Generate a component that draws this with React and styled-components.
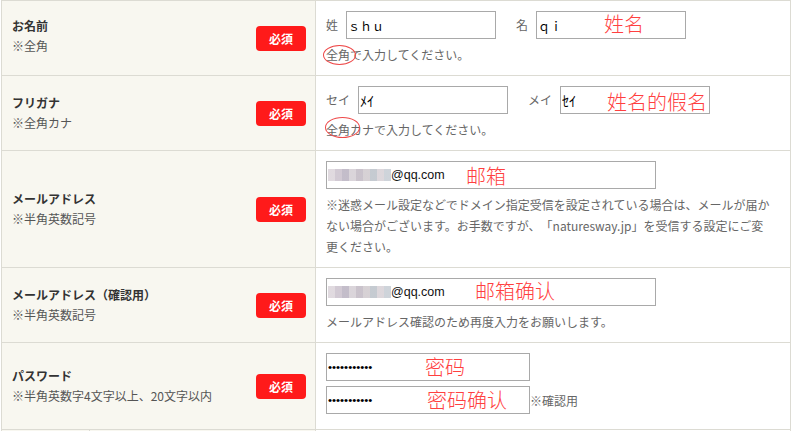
import React from 'react';
import styled, { createGlobalStyle } from 'styled-components';

const Global = createGlobalStyle`
  html, body { margin: 0; padding: 0; background: #fff; }
  body {
    font-family: "Noto Sans CJK JP", "Noto Sans", sans-serif;
    font-size: 12px;
    color: #333;
    text-spacing-trim: space-all;
  }
`;

const Table = styled.div`
  margin-left: 1px;
  width: 790px;
  box-sizing: border-box;
  border-top: 1px solid #dcdbd3;
  border-left: 1px solid #dcdbd3;
  border-right: 1px solid #dcdbd3;
`;

const Row = styled.div`
  display: grid;
  grid-template-columns: 314px 1fr;
  border-bottom: 1px solid #dcdbd3;
`;

const LabelCell = styled.div`
  background: #f8f7f0;
  border-right: 1px solid #dcdbd3;
  display: flex;
  align-items: center;
  justify-content: space-between;
  padding: 0 9px 0 10px;
`;

const LabelText = styled.div`
  display: flex;
  flex-direction: column;
  line-height: 20px;
  margin-top: ${(p) => p.$shift || 0}px;
`;

const Title = styled.div`
  font-weight: 700;
  color: #333;
`;

const Sub = styled.div`
  color: #555;
`;

const Badge = styled.span`
  width: 50px;
  height: 25px;
  border-radius: 4px;
  background: #ff1a1a;
  color: #fff;
  font-weight: 700;
  font-size: 12px;
  display: flex;
  align-items: center;
  justify-content: center;
`;

const ValueCell = styled.div`
  position: relative;
  padding: 10px 10px ${(p) => p.$pb || 10}px 10px;
  color: #666;
`;

const InlineFields = styled.div`
  display: flex;
  align-items: center;
  height: 28px;
`;

const FieldLabel = styled.span`
  margin: 0 8px 0 ${(p) => (p.$first ? 0 : 20)}px;
  color: #666;
  line-height: 28px;
`;

const TextInput = styled.input`
  box-sizing: border-box;
  width: ${(p) => p.$w}px;
  height: 28px;
  margin: 0;
  padding: 0 0 0 1px;
  border: 1px solid #a9a9a9;
  border-radius: 0;
  background: #fff;
  color: #000;
  font-family: ${(p) =>
    p.$latin ? '"Liberation Sans", Arial, sans-serif' : '"Noto Sans CJK JP", sans-serif'};
  font-size: ${(p) => p.$fs || 12}px;
  outline: none;
`;

const MailField = styled.div`
  box-sizing: border-box;
  width: 330px;
  height: 28px;
  border: 1px solid #a9a9a9;
  background: #fff;
  display: flex;
  align-items: center;
  padding-left: 1px;
  font-family: "Liberation Sans", Arial, sans-serif;
  font-size: 12.5px;
  color: #111;
`;

const Mosaic = styled.span`
  width: 63px;
  height: 12px;
  background:
    linear-gradient(90deg,
      #ddd6dc 0 7px, #cdc4cf 7px 14px, #bdb6c4 14px 21px, #d6d0d6 21px 28px,
      #c4bcc6 28px 35px, #d2ccd0 35px 42px, #bfc5cc 42px 49px, #d9d3d8 49px 56px,
      #c9cfd6 56px 63px);
  opacity: 0.9;
`;

const Hint = styled.p`
  margin: 5px 0 0;
  max-width: 448px;
  line-height: 21px;
  color: #666;
  font-size: 12px;
`;

const Stack = styled.div`
  display: flex;
  flex-direction: column;
  gap: 5px;
`;

const Confirm = styled.span`
  color: #666;
  font-size: 12px;
`;

const Note = styled.span`
  position: absolute;
  left: ${(p) => p.$x}px;
  top: ${(p) => p.$y}px;
  font-family: "Noto Sans CJK SC", sans-serif;
  font-weight: 300;
  font-size: 20px;
  line-height: 20px;
  color: #ff4040;
  white-space: nowrap;
  pointer-events: none;
`;

const Ring = styled.span`
  position: absolute;
  left: ${(p) => p.$x}px;
  top: ${(p) => p.$y}px;
  width: ${(p) => p.$w}px;
  height: ${(p) => p.$h}px;
  box-sizing: border-box;
  border: 1px solid #ee4848;
  border-radius: 50%;
  pointer-events: none;
`;

const SubSplit = styled.div`
  height: 40px;
  width: 77px;
  border-right: 1px solid #dcdbd3;
`;

const Label = ({ title, sub, shift }) => (
  <LabelCell>
    <LabelText $shift={shift}>
      <Title>{title}</Title>
      <Sub>{sub}</Sub>
    </LabelText>
    <Badge>必須</Badge>
  </LabelCell>
);

export default function App() {
  return (
    <>
      <Global />
      <Table>
        <Row>
          <Label title="お名前" sub="※全角" shift={-5} />
          <ValueCell>
            <InlineFields>
              <FieldLabel $first>姓</FieldLabel>
              <TextInput $w={150} readOnly value="ｓｈｕ" />
              <FieldLabel>名</FieldLabel>
              <TextInput $w={150} readOnly value="ｑｉ" />
            </InlineFields>
            <Hint>全角で入力してください。</Hint>
            <Note $x={288} $y={13}>姓名</Note>
            <Ring $x={7} $y={44} $w={33} $h={20} />
          </ValueCell>
        </Row>

        <Row>
          <Label title="フリガナ" sub="※全角カナ" />
          <ValueCell>
            <InlineFields>
              <FieldLabel $first>セイ</FieldLabel>
              <TextInput $w={150} $fs={14} readOnly value="ﾒｲ" />
              <FieldLabel>メイ</FieldLabel>
              <TextInput $w={150} $fs={14} readOnly value="ｾｲ" />
            </InlineFields>
            <Hint>全角カナで入力してください。</Hint>
            <Note $x={291} $y={16}>姓名的假名</Note>
            <Ring $x={9} $y={41} $w={35} $h={21} />
          </ValueCell>
        </Row>

        <Row>
          <Label title="メールアドレス" sub="※半角英数記号" />
          <ValueCell>
            <MailField>
              <Mosaic />
              <span>@qq.com</span>
            </MailField>
            <Hint>
              ※迷惑メール設定などでドメイン指定受信を設定されている場合は、メールが届かない場合がございます。お手数ですが、「naturesway.jp」を受信する設定にご変更ください。
            </Hint>
            <Note $x={150} $y={15}>邮箱</Note>
          </ValueCell>
        </Row>

        <Row>
          <Label title="メールアドレス（確認用）" sub="※半角英数記号" />
          <ValueCell>
            <MailField>
              <Mosaic />
              <span>@qq.com</span>
            </MailField>
            <Hint>メールアドレス確認のため再度入力をお願いします。</Hint>
            <Note $x={159} $y={13}>邮箱确认</Note>
          </ValueCell>
        </Row>

        <Row>
          <Label title="パスワード" sub="※半角英数字4文字以上、20文字以内" />
          <ValueCell $pb={15}>
            <Stack>
              <InlineFields>
                <TextInput $w={204} $latin $fs={11.5} type="password" readOnly value="abcdefghijk" />
              </InlineFields>
              <InlineFields>
                <TextInput $w={204} $latin $fs={11.5} type="password" readOnly value="abcdefghijk" />
                <Confirm>※確認用</Confirm>
              </InlineFields>
            </Stack>
            <Note $x={109} $y={14}>密码</Note>
            <Note $x={111} $y={47}>密码确认</Note>
          </ValueCell>
        </Row>

        <Row>
          <LabelCell>
            <SubSplit />
          </LabelCell>
          <ValueCell />
        </Row>
      </Table>
    </>
  );
}
